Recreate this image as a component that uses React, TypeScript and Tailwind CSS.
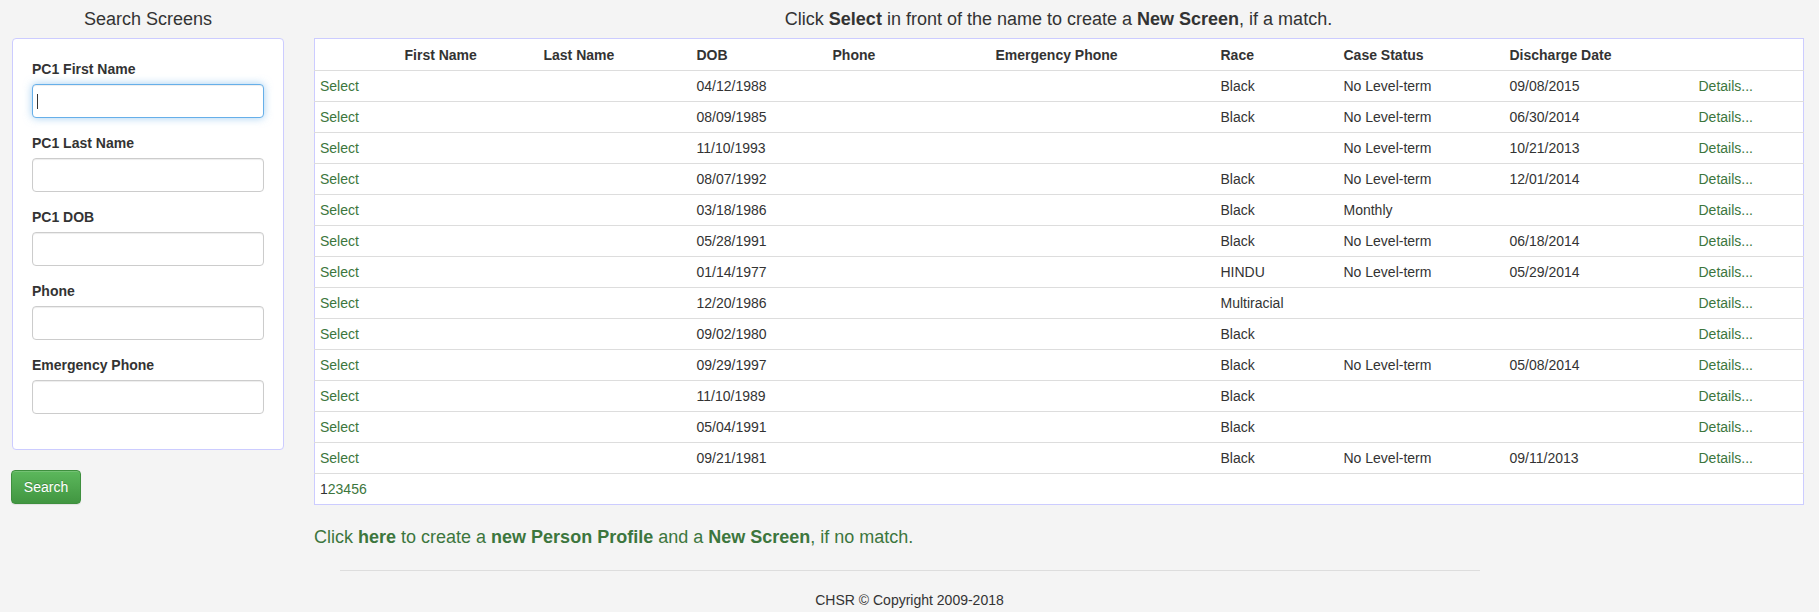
const rows = [
  { dob: "04/12/1988", race: "Black", status: "No Level-term", discharge: "09/08/2015" },
  { dob: "08/09/1985", race: "Black", status: "No Level-term", discharge: "06/30/2014" },
  { dob: "11/10/1993", race: "", status: "No Level-term", discharge: "10/21/2013" },
  { dob: "08/07/1992", race: "Black", status: "No Level-term", discharge: "12/01/2014" },
  { dob: "03/18/1986", race: "Black", status: "Monthly", discharge: "" },
  { dob: "05/28/1991", race: "Black", status: "No Level-term", discharge: "06/18/2014" },
  { dob: "01/14/1977", race: "HINDU", status: "No Level-term", discharge: "05/29/2014" },
  { dob: "12/20/1986", race: "Multiracial", status: "", discharge: "" },
  { dob: "09/02/1980", race: "Black", status: "", discharge: "" },
  { dob: "09/29/1997", race: "Black", status: "No Level-term", discharge: "05/08/2014" },
  { dob: "11/10/1989", race: "Black", status: "", discharge: "" },
  { dob: "05/04/1991", race: "Black", status: "", discharge: "" },
  { dob: "09/21/1981", race: "Black", status: "No Level-term", discharge: "09/11/2013" },
];

const fields = ["PC1 First Name", "PC1 Last Name", "PC1 DOB", "Phone", "Emergency Phone"];

const headers = ["", "First Name", "Last Name", "DOB", "Phone", "Emergency Phone", "Race", "Case Status", "Discharge Date", ""];
const widths = [85, 139, 153, 136, 163, 225, 123, 166, 189, 110];

export default function App() {
  return (
    <div className="min-h-[612px] bg-[#f4f4f4] text-[14px] leading-[20px] text-[#333] font-['Liberation_Sans',Arial,sans-serif]">
      <div className="flex">

        {/* search form */}
        <div className="w-[272px] ml-[12px] shrink-0">
          <div className="h-[38px] flex items-center justify-center text-[18px]">Search Screens</div>
          <div className="bg-white border border-[#ccccff] rounded-[4px] px-[19px] pt-[20px] pb-[20px]">
            {fields.map((f, i) => (
              <div key={f} className="mb-[15px]">
                <div className="font-bold mb-[5px]">{f}</div>
                {i === 0 ? (
                  <div className="relative h-[34px] w-[232px] rounded-[4px] bg-white border border-[#66afe9] shadow-[inset_0_1px_1px_rgba(0,0,0,0.075),0_0_8px_rgba(102,175,233,0.6)]">
                    <span className="absolute left-[4px] top-[9px] h-[15px] w-px bg-[#333]" />
                  </div>
                ) : (
                  <input className="block h-[34px] w-[232px] rounded-[4px] bg-white border border-[#ccc] shadow-[inset_0_1px_1px_rgba(0,0,0,0.075)] outline-none" />
                )}
              </div>
            ))}
          </div>
          <button className="mt-[20px] h-[34px] w-[70px] -ml-px rounded-[4px] border border-[#3e8f3e] bg-gradient-to-b from-[#5cb85c] to-[#419641] text-white text-[14px] [text-shadow:0_-1px_0_rgba(0,0,0,0.2)] shadow-[inset_0_1px_0_rgba(255,255,255,0.15),0_1px_1px_rgba(0,0,0,0.075)]">
            Search
          </button>
        </div>

        {/* results */}
        <div className="w-[1489px] ml-[30px] shrink-0">
          <div className="h-[38px] flex items-center justify-center text-[18px]">
            <span>
              Click <b>Select</b> in front of the name to create a <b>New Screen</b>, if a match.
            </span>
          </div>
          <table className="w-[1489px] table-fixed border-collapse bg-white border border-[#ccccff]">
            <colgroup>
              {widths.map((w, i) => (
                <col key={i} style={{ width: w }} />
              ))}
            </colgroup>
            <thead>
              <tr className="border-b border-[#ddd]">
                {headers.map((h, i) => (
                  <th key={i} className="px-[5px] py-[5px] text-left font-bold h-[32px]">{h}</th>
                ))}
              </tr>
            </thead>
            <tbody>
              {rows.map((r, i) => (
                <tr key={i} className="border-b border-[#ddd] h-[31px]">
                  <td className="px-[5px] py-[5px] text-[#3c763d]">Select</td>
                  <td className="px-[5px] py-[5px]"></td>
                  <td className="px-[5px] py-[5px]"></td>
                  <td className="px-[5px] py-[5px]">{r.dob}</td>
                  <td className="px-[5px] py-[5px]"></td>
                  <td className="px-[5px] py-[5px]"></td>
                  <td className="px-[5px] py-[5px]">{r.race}</td>
                  <td className="px-[5px] py-[5px]">{r.status}</td>
                  <td className="px-[5px] py-[5px]">{r.discharge}</td>
                  <td className="px-[5px] py-[5px] text-[#3c763d]">Details...</td>
                </tr>
              ))}
              <tr className="h-[31px]">
                <td colSpan={10} className="px-[5px] py-[5px]">
                  <span>1</span>
                  <span className="text-[#3c763d]">23456</span>
                </td>
              </tr>
            </tbody>
          </table>
          <div className="mt-[19px] text-[18px] leading-[26px] text-[#3c763d]">
            Click <b>here</b> to create a <b>new Person Profile</b> and a <b>New Screen</b>, if no match.
          </div>
        </div>
      </div>

      {/* footer */}
      <div className="w-[1140px] mx-auto">
        <hr className="mt-[20px] border-0 border-t border-[#ddd]" />
        <div className="mt-[19px] text-center">CHSR © Copyright 2009-2018</div>
      </div>
    </div>
  );
}
